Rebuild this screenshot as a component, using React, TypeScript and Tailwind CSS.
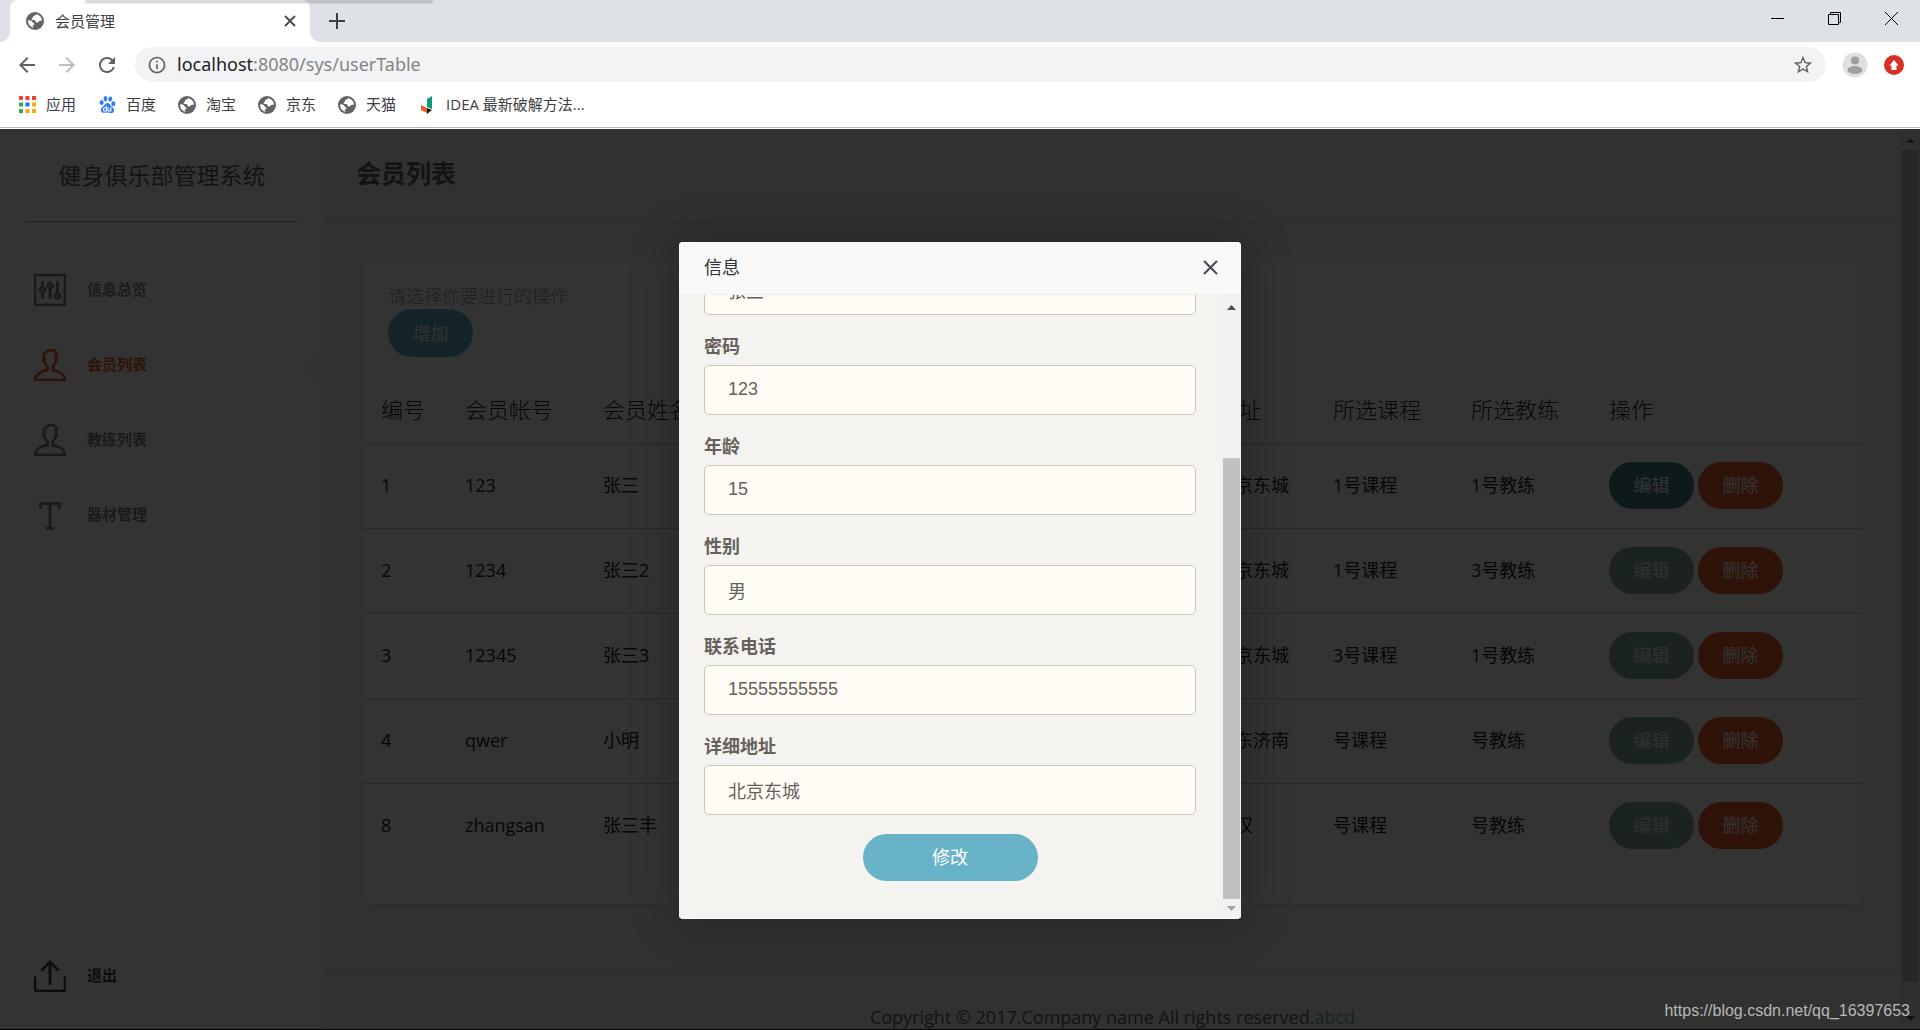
import React from "react";
import { TfiExport, TfiPanel, TfiText, TfiUser } from "react-icons/tfi";
import {
  MdArrowBack,
  MdArrowForward,
  MdInfoOutline,
  MdRefresh,
  MdStarBorder,
} from "react-icons/md";
import { SiBaidu } from "react-icons/si";

interface IMember {
  id: number;
  account: string;
  name: string;
  address: string;
  course: string;
  coach: string;
}

const members: IMember[] = [
  { id: 1, account: "123", name: "张三", address: "北京东城", course: "1号课程", coach: "1号教练" },
  { id: 2, account: "1234", name: "张三2", address: "北京东城", course: "1号课程", coach: "3号教练" },
  { id: 3, account: "12345", name: "张三3", address: "北京东城", course: "3号课程", coach: "1号教练" },
  { id: 4, account: "qwer", name: "小明", address: "山东济南", course: "号课程", coach: "号教练" },
  { id: 8, account: "zhangsan", name: "张三丰", address: "武汉", course: "号课程", coach: "号教练" },
];

const columns = [
  { title: "编号", width: "w-[84px]" },
  { title: "会员帐号", width: "w-[138px]" },
  { title: "会员姓名", width: "w-[138px]" },
  { title: "", width: "w-[476px]" },
  { title: "地址", width: "w-[116px]" },
  { title: "所选课程", width: "w-[138px]" },
  { title: "所选教练", width: "w-[138px]" },
  { title: "操作", width: "" },
];

const navItems = [
  { title: "信息总览", icon: TfiPanel },
  { title: "会员列表", icon: TfiUser, active: true },
  { title: "教练列表", icon: TfiUser },
  { title: "器材管理", icon: TfiText },
];

const fields = [
  { id: "name", label: "", value: "张三" },
  { id: "password", label: "密码", value: "123" },
  { id: "age", label: "年龄", value: "15" },
  { id: "gender", label: "性别", value: "男" },
  { id: "phone", label: "联系电话", value: "15555555555" },
  { id: "address", label: "详细地址", value: "北京东城" },
];

const AppsIcon = () => (
  <svg viewBox="0 0 17 17" className="size-[17px]">
    <path fill="#ea4335" d="M0 0h4v4H0zM6.5 0h4v4h-4zM13 0h4v4h-4z" />
    <path fill="#34a853" d="M0 6.5h4v4H0zM0 13h4v4H0z" />
    <path fill="#1a73e8" d="M6.5 6.5h4v4h-4z" />
    <path fill="#fbab05" d="M13 6.5h4v4h-4zM6.5 13h4v4h-4zM13 13h4v4h-4z" />
  </svg>
);

const IdeaIcon = () => (
  <svg viewBox="0 0 17 20" className="h-5 w-[17px]">
    <path fill="#0b9b7b" d="M8 4l5-3v13l-5-2z" />
    <path fill="#f4591f" d="M2 10l6 3v5l-6-3z" />
    <path fill="#2b1408" d="M8 13l5 2-5 4z" />
  </svg>
);

const GlobeIcon = () => (
  <svg viewBox="0 0 18 18" className="size-[18px] shrink-0">
    <circle cx="9" cy="9" r="9" fill="#5f6368" />
    <path
      fill="#fff"
      d="M10 2.200c-.8 1.200-1.800 1.300-2.600 1.900-.7.600-.2 1.400-.8 1.900-.5.500-1.200.5-1.100 1.300.1.700 1.200.6 2 .6 1.500 0 2 .7 2 1.700 0 .7.9.9 1.900.8 1.300-.1 1.200-1.500 2.200-1.700.8-.2 1.500.2 2.300.1.200-3-2.400-6.300-5.900-6.600z"
    />
    <path
      fill="#fff"
      d="M2.100 8.300c1.400 0 2.800.1 3.800.9.8.6.7 1.500 1.500 1.900.8.300 1.100.8.900 1.500-.3.800-1.500.7-1.500 1.700 0 .6.500.9 1.300 1.600C4.500 15.500 1.800 12.300 2.100 8.300z"
    />
  </svg>
);

const bookmarks = [
  { title: "应用", icon: <AppsIcon /> },
  { title: "百度", icon: <SiBaidu className="size-[17px] text-[#2f7cf6]" /> },
  { title: "淘宝", icon: <GlobeIcon /> },
  { title: "京东", icon: <GlobeIcon /> },
  { title: "天猫", icon: <GlobeIcon /> },
  { title: "IDEA 最新破解方法...", icon: <IdeaIcon /> },
];

const BrowserChrome = () => (
  <header className="shrink-0 bg-white font-['Open_Sans','Noto_Sans_CJK_SC',sans-serif]">
    {/* Tab strip */}
    <div className="relative flex h-[42px] bg-[#dee1e6] pl-[10px]">
      <div className="absolute top-0 left-[85px] z-10 h-[3px] w-[348px] bg-black/20 blur-[1px]" />
      <div className="relative flex w-[300px] items-center rounded-t-lg bg-white pl-4 pr-[10px]">
        <svg viewBox="0 0 10 10" className="absolute bottom-0 -left-[10px] size-[10px] fill-white">
          <path d="M10 0v10H0A10 10 0 0 0 10 0z" />
        </svg>
        <svg viewBox="0 0 10 10" className="absolute -right-[10px] bottom-0 size-[10px] fill-white">
          <path d="M0 0v10h10A10 10 0 0 1 0 0z" />
        </svg>
        <GlobeIcon />
        <span className="ml-[11px] flex-1 text-[15px] text-[#3c4043]">会员管理</span>
        <button aria-label="关闭标签页" className="p-1">
          <svg viewBox="0 0 12 12" className="size-3 stroke-[#45494d]" strokeWidth="1.8">
            <path d="M1 1l10 10M11 1L1 11" />
          </svg>
        </button>
      </div>
      <button aria-label="新标签页" className="ml-[19px]">
        <svg viewBox="0 0 16 16" className="size-4 stroke-[#3c4043]" strokeWidth="2">
          <path d="M8 0v16M0 8h16" />
        </svg>
      </button>
      <div className="ml-auto flex h-9 items-center">
        <button aria-label="最小化" className="flex w-[57px] justify-center">
          <svg viewBox="0 0 13 13" className="size-[13px] stroke-black">
            <path d="M0 6.5h13" />
          </svg>
        </button>
        <button aria-label="还原" className="flex w-[57px] justify-center">
          <svg viewBox="0 0 13 13" className="size-[13px] fill-none stroke-black">
            <path d="M.5 2.5h10v10H.5zM2.5 2.5v-2h10v10h-2" />
          </svg>
        </button>
        <button aria-label="关闭" className="flex w-[57px] justify-center">
          <svg viewBox="0 0 13 13" className="size-[13px] stroke-black">
            <path d="M0 0l13 13M13 0L0 13" />
          </svg>
        </button>
      </div>
    </div>

    {/* Toolbar */}
    <div className="flex items-center gap-4 pt-[5px] pr-4 pl-[15px] text-[#5f6368]">
      <button aria-label="后退">
        <MdArrowBack className="size-6" />
      </button>
      <button aria-label="前进" className="text-[#bcbec1]">
        <MdArrowForward className="size-6" />
      </button>
      <button aria-label="刷新">
        <MdRefresh className="size-6" />
      </button>
      <div className="flex h-[35px] flex-1 items-center rounded-full bg-[#f1f3f4] px-3">
        <MdInfoOutline className="size-[20px]" />
        <span className="ml-[10px] flex-1 font-['Noto_Sans',sans-serif] text-[18px] text-[#80868b]">
          <span className="text-[#202124]">localhost</span>:8080/sys/userTable
        </span>
        <button aria-label="添加书签">
          <MdStarBorder className="size-[22px]" />
        </button>
      </div>
      <button aria-label="用户">
        <svg viewBox="0 0 26 26" className="size-[26px]">
          <circle cx="13" cy="13" r="12.5" fill="#dfdfdf" />
          <circle cx="13" cy="8.5" r="4" fill="#9e9e9e" />
          <ellipse cx="13" cy="18" rx="7.5" ry="4" fill="#9e9e9e" />
        </svg>
      </button>
      <button aria-label="更新">
        <svg viewBox="0 0 20 20" className="size-5">
          <circle cx="10" cy="10" r="10" fill="#d93025" />
          <path fill="#fff" d="M10 5l4.5 5.5H12.500V15h-5v-4.500H5.500z" />
        </svg>
      </button>
    </div>

    {/* Bookmarks */}
    <nav className="flex h-[46px] items-center gap-[22px] border-b border-[#b5b8ba] pl-[18px]">
      {bookmarks.map((item) => (
        <a
          key={item.title}
          href="#"
          className="flex items-center gap-[10px] text-[15px] text-[#3c4043]"
        >
          <span className="flex w-[18px] justify-center">{item.icon}</span>
          {item.title}
        </a>
      ))}
    </nav>
    <div className="h-px bg-white" />
  </header>
);

const Sidebar = () => (
  <aside className="flex w-[325px] shrink-0 flex-col border-r border-[#dddddd] bg-white pb-4 font-bold text-[#66615b]">
    <div className="mx-[25px] flex h-[93px] items-center justify-center border-b border-[#a8a49f]">
      <a href="#" className="text-[23px] font-normal text-[#66615b]">
        健身俱乐部管理系统
      </a>
    </div>
    <nav className="mt-[30px] flex flex-1 flex-col">
      {navItems.map(({ title, icon: Icon, active }) => (
        <a
          key={title}
          href="#"
          className={
            active
              ? "relative flex h-[75px] items-center pl-[34px] text-[15px] text-[#eb5e28]"
              : "relative flex h-[75px] items-center pl-[34px] text-[15px] opacity-80"
          }
        >
          <Icon className="size-8 stroke-[0.5px]" />
          <span className="ml-[21px]">{title}</span>
          {active && (
            <svg viewBox="0 0 21 42" className="absolute top-[17px] -right-px h-[42px] w-[21px]">
              <path d="M21 0L1 21l20 21z" fill="#f4f3ef" />
              <path d="M20.500 0L.5 21l20 21" fill="none" stroke="#dddddd" />
            </svg>
          )}
        </a>
      ))}
      <a
        href="#"
        className="mt-auto flex h-[75px] items-center pl-[34px] text-[15px] text-[#403d39]"
      >
        <TfiExport className="size-8 stroke-[0.5px]" />
        <span className="ml-[21px]">退出</span>
      </a>
    </nav>
  </aside>
);

const MemberTable = () => (
  <table className="w-full table-fixed text-left text-[18px] text-[#252422]">
    <thead>
      <tr className="h-[66px] border-b border-[#ccc5b9] text-[22px]">
        {columns.map((col, index) => (
          <th key={index} className={`${col.width} pl-[18px] font-light whitespace-nowrap`}>
            {col.title}
          </th>
        ))}
      </tr>
    </thead>
    <tbody>
      {members.map((member, index) => (
        <tr
          key={member.id}
          className="h-[85px] border-b border-[#ccc5b9] last:border-b-0 even:bg-[#fffcf5]"
        >
          <td className="pl-[18px]">{member.id}</td>
          <td className="pl-[18px]">{member.account}</td>
          <td className="pl-[18px]">{member.name}</td>
          <td />
          <td className="pl-[18px]">{member.address}</td>
          <td className="pl-[18px]">{member.course}</td>
          <td className="pl-[18px]">{member.coach}</td>
          <td className="pl-[18px]">
            <div className="flex gap-1">
              <button
                className={
                  index === 0
                    ? "h-[47px] w-[85px] rounded-full bg-[#427c89] text-white"
                    : "h-[47px] w-[85px] rounded-full bg-[#80a8a8] text-white/90"
                }
              >
                编辑
              </button>
              <button className="h-[47px] w-[85px] rounded-full bg-[#eb5e28] text-white">
                删除
              </button>
            </div>
          </td>
        </tr>
      ))}
    </tbody>
  </table>
);

const EditDialog = () => (
  <div
    role="dialog"
    aria-label="信息"
    className="flex h-[677px] w-[562px] flex-col overflow-hidden rounded-sm bg-white pb-px shadow-[1px_1px_50px_rgba(0,0,0,0.3)]"
  >
    <div className="flex h-[53px] shrink-0 items-center justify-between border-b border-[#eeeeee] bg-[#f8f8f8] pr-[23px] pl-[25px] text-[18px] text-[#333333]">
      信息
      <button aria-label="关闭">
        <svg viewBox="0 0 15 15" className="size-[15px] stroke-[#4a4955]" strokeWidth="2">
          <path d="M1 1l13 13M14 1L1 14" />
        </svg>
      </button>
    </div>
    <div className="flex min-h-0 flex-1 bg-[#f4f3ef]">
      {/* Form is scrolled to its end */}
      <form className="flex flex-1 flex-col justify-end overflow-hidden px-[25px] pb-[37px]">
        {fields.map((field) => (
          <div key={field.id} className="mb-[19px] shrink-0">
            {field.label && (
              <label
                htmlFor={field.id}
                className="mb-[6px] block text-[18px] leading-[25px] font-bold text-[#66615b]"
              >
                {field.label}
              </label>
            )}
            <input
              id={field.id}
              aria-label={field.label ? undefined : "会员姓名"}
              defaultValue={field.value}
              className="block h-[50px] w-full rounded-[5px] border border-[#ccc5b9] bg-[#fffcf5] px-[23px] font-['Liberation_Sans','Noto_Sans_CJK_SC',sans-serif] text-[18px] text-[#66615b] outline-none"
            />
          </div>
        ))}
        <button
          type="button"
          className="h-[47px] w-[175px] shrink-0 self-center rounded-full bg-[#68b3c8] text-[18px] text-white"
        >
          修改
        </button>
      </form>
      <div className="flex w-5 flex-col items-center bg-[#f1f1f1]">
        <svg viewBox="0 0 9 5" className="mt-[10px] h-[5px] w-[9px] fill-[#505050]">
          <path d="M4.500 0L9 5H0z" />
        </svg>
        <div className="mt-auto h-[441px] w-[17px] bg-[#c1c1c1]" />
        <svg viewBox="0 0 9 5" className="my-[7px] h-[5px] w-[9px] fill-[#a3a3a3]">
          <path d="M4.500 5L9 0H0z" />
        </svg>
      </div>
    </div>
  </div>
);

const App = () => {
  return (
    <div className="flex h-screen flex-col overflow-hidden border-b border-black">
      <BrowserChrome />
      <div className="relative flex min-h-0 flex-1 font-['Open_Sans','Noto_Sans_CJK_SC',sans-serif]">
        <Sidebar />
        <main className="flex min-w-0 flex-1 flex-col overflow-hidden bg-[#f4f3ef]">
          <div className="flex h-[94px] shrink-0 items-center border-b border-[#dddddd] pb-1 pl-[31px]">
            <h1 className="text-[25px] font-bold text-[#66615b]">会员列表</h1>
          </div>
          <section className="mx-[38px] mt-[37px] h-[645px] shrink-0 rounded-lg bg-white shadow-[0_2px_2px_rgba(204,197,185,0.5)]">
            <div className="px-[25px] pt-6 text-[18px]">
              <p className="leading-[25px] font-light text-[#9a9a9a]">请选择你要进行的操作</p>
              <button className="h-12 w-[85px] rounded-full bg-[#68b3c8] text-white/90">
                增加
              </button>
            </div>
            <div className="mt-5">
              <MemberTable />
            </div>
          </section>
          <footer className="mt-[66px] shrink-0 border-t border-[#dddddd] pt-8 text-center text-[18px] text-[#66615b]">
            Copyright © 2017.Company name All rights reserved.
            <a href="#" className="text-[#68b3c8]">
              abcd
            </a>
          </footer>
        </main>
        <div className="flex w-5 shrink-0 flex-col items-center bg-[#f1f1f1]">
          <svg viewBox="0 0 9 5" className="mt-[9px] h-[5px] w-[9px] fill-[#707070]">
            <path d="M4.500 0L9 5H0z" />
          </svg>
          <div className="mt-[7px] w-[17px] flex-1 bg-[#c1c1c1]" />
          <svg viewBox="0 0 9 5" className="mt-[34px] mb-2 h-[5px] w-[9px] fill-[#505050]">
            <path d="M4.500 5L9 0H0z" />
          </svg>
        </div>

        <div className="absolute inset-0 flex items-center justify-center bg-black/80 pt-[2px]">
          <EditDialog />
        </div>
        <span className="absolute right-[10px] bottom-[6px] font-['Liberation_Sans',sans-serif] text-[16px] text-[#b8b8b8]">
          https://blog.csdn.net/qq_16397653
        </span>
      </div>
    </div>
  );
};

export default App;
